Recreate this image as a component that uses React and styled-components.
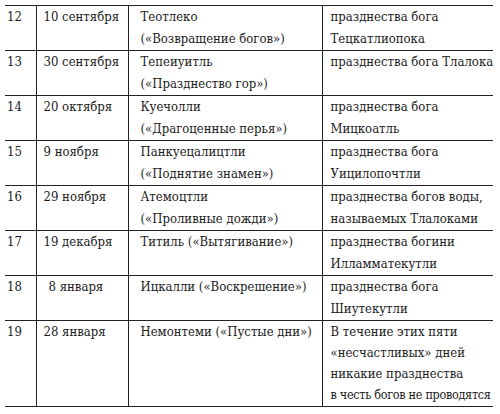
import React from 'react'
import styled, { createGlobalStyle } from 'styled-components'

const GlobalStyle = createGlobalStyle`
  html, body {
    margin: 0;
    padding: 0;
    background: #fff;
  }
  body {
    font-family: "DejaVu Serif Condensed", "DejaVu Serif", serif;
    color: #1b1b1b;
  }
`

const Page = styled.div`
  width: 500px;
  height: 414px;
  padding: 5px 0 0 5px;
  box-sizing: border-box;
  overflow: hidden;
`

const Table = styled.table`
  width: 488px;
  border-collapse: collapse;
  table-layout: fixed;
  font-family: "DejaVu Serif Condensed", "DejaVu Serif", serif;
  font-stretch: condensed;
  font-size: 13px;
  color: #1b1b1b;
`

const Row = styled.tr`
  height: ${p => (p.$tall ? 86 : 44.5)}px;
  border-top: 1.5px solid #222;
  border-bottom: 1.5px solid #222;
`

const Cell = styled.td`
  vertical-align: top;
  padding: 0 2px 0 ${p => p.$pad || 6}px;
  line-height: 22px;
  white-space: nowrap;
  & + & {
    border-left: 1.5px solid #222;
  }
`

const Notes = styled.div`
  display: flex;
  flex-direction: column;
  line-height: 21px;
`

const Note = styled.div`
  ${p => p.$tight && 'letter-spacing: -0.3px; font-size: 12.5px;'}
`

const rows = [
  ['12', '10 сентября', ['Теотлеко', '(«Возвращение богов»)'], ['празднества бога', 'Тецкатлиопока']],
  ['13', '30 сентября', ['Тепеиуитль', '(«Празднество гор»)'], ['празднества бога Тлалока']],
  ['14', '20 октября', ['Куечолли', '(«Драгоценные перья»)'], ['празднества бога', 'Мицкоатль']],
  ['15', '9 ноября', ['Панкуецалицтли', '(«Поднятие знамен»)'], ['празднества бога', 'Уицилопочтли']],
  ['16', '29 ноября', ['Атемоцтли', '(«Проливные дожди»)'], ['празднества богов воды,', 'называемых Тлалоками']],
  ['17', '19 декабря', ['Титиль («Вытягивание»)'], ['празднества богини', 'Илламматекутли']],
  ['18', '8 января', ['Ицкалли («Воскрешение»)'], ['празднества бога', 'Шиутекутли']],
]

export default function App() {
  return (
    <Page>
      <GlobalStyle />
      <Table>
        <colgroup>
          <col style={{ width: 31 }} />
          <col style={{ width: 92 }} />
          <col style={{ width: 194 }} />
          <col style={{ width: 171 }} />
        </colgroup>
        <tbody>
          {rows.map(([n, date, name, desc]) => (
            <Row key={n}>
              <Cell $pad={2}>{n}</Cell>
              <Cell $pad={n === '18' ? 12 : 7}>{date}</Cell>
              <Cell $pad={12}>
                {name.map(l => <div key={l}>{l}</div>)}
              </Cell>
              <Cell $pad={8}>
                {desc.map(l => <div key={l}>{l}</div>)}
              </Cell>
            </Row>
          ))}
          <Row $tall>
            <Cell $pad={2}>19</Cell>
            <Cell $pad={7}>28 января</Cell>
            <Cell $pad={12}>Немонтеми («Пустые дни»)</Cell>
            <Cell $pad={8}>
              <Notes>
                <Note>В течение этих пяти</Note>
                <Note>«несчастливых» дней</Note>
                <Note>никакие празднества</Note>
                <Note $tight>в честь богов не проводятся</Note>
              </Notes>
            </Cell>
          </Row>
        </tbody>
      </Table>
    </Page>
  )
}
